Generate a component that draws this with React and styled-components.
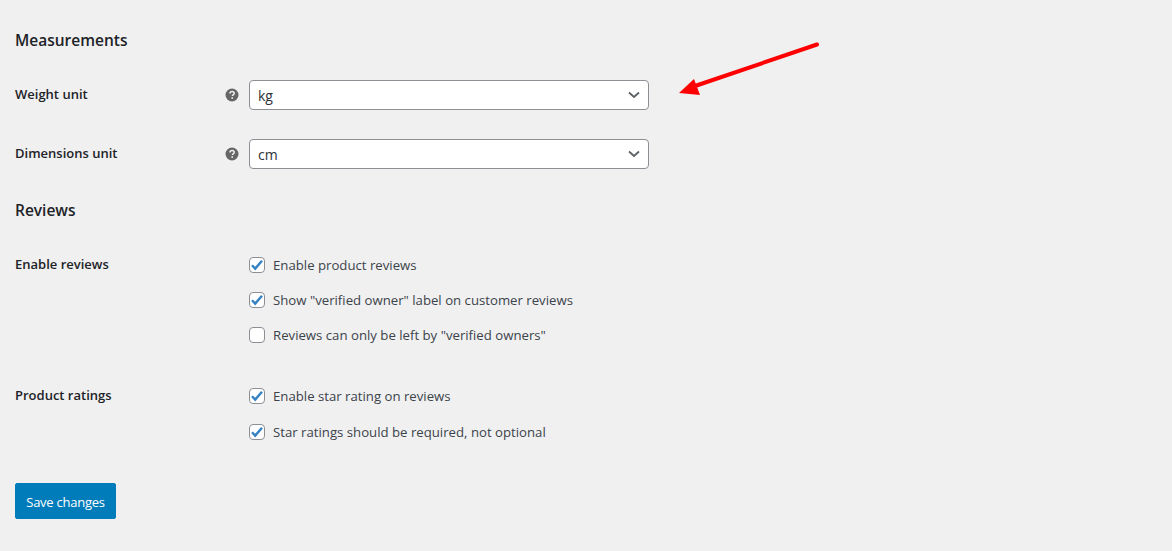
import React from 'react'
import styled, { createGlobalStyle } from 'styled-components'

const GlobalStyle = createGlobalStyle`
  html, body { margin: 0; padding: 0; background: #f0f0f1; }
  body {
    font-family: "Open Sans", "Noto Sans", "Liberation Sans", sans-serif;
    font-size: 13px;
    color: #3c434a;
  }
`

const Page = styled.div`
  position: relative;
  width: 1172px;
  height: 551px;
  box-sizing: border-box;
  padding: 30px 15px 0;
  overflow: hidden;
`

const Heading = styled.h2`
  margin: ${p => p.$top || 0}px 0 0;
  height: 20px;
  font-size: 15.5px;
  line-height: 20px;
  font-weight: 600;
  color: #1d2327;
`

const Row = styled.div`
  display: grid;
  grid-template-columns: 210px 24px 1fr;
  margin-top: ${p => p.$top}px;
`

const Label = styled.div`
  font-size: 13px;
  line-height: 18px;
  font-weight: 600;
  color: #1d2327;
  padding-top: ${p => p.$pad ?? 5}px;
`

const HelpSlot = styled.div`
  display: flex;
  align-items: center;
  height: 30px;
`

const Select = styled.div`
  width: 400px;
  height: 30px;
  box-sizing: border-box;
  border: 1px solid #8c8f94;
  border-radius: 4px;
  background: #fff;
  display: flex;
  align-items: center;
  justify-content: space-between;
  padding: 0 8px;
  font-size: 14px;
  color: #2c3338;
`

const Options = styled.div`
  display: flex;
  flex-direction: column;
  gap: ${p => p.$gap}px;
  grid-column: 3;
`

const Check = styled.label`
  display: flex;
  align-items: center;
  gap: 8px;
  height: 20px;
  font-size: 13.2px;
  color: #3c434a;
`

const Box = styled.span`
  width: 16px;
  height: 16px;
  box-sizing: border-box;
  border: 1px solid #8c8f94;
  border-radius: 4px;
  background: #fff;
  display: flex;
  align-items: center;
  justify-content: center;
`

const SaveButton = styled.button`
  display: block;
  width: 101px;
  height: 36px;
  margin-top: 41px;
  padding: 2px 0 0;
  border: 1px solid #007cba;
  border-radius: 2px;
  background: #007cba;
  color: #fff;
  font-family: inherit;
  font-size: 13px;
  letter-spacing: -0.25px;
`

const Arrow = styled.svg`
  position: absolute;
  left: 670px;
  top: 35px;
`

const HelpIcon = () => (
  <svg width="14" height="14" viewBox="0 0 14 14" aria-hidden="true">
    <circle cx="7" cy="7" r="6.5" fill="#666" />
    <path d="M4.9 5.5C5 4.2 5.9 3.5 7.1 3.5c1.2 0 2.1.7 2.1 1.8 0 .9-.5 1.3-1.1 1.7-.5.3-.7.6-.7 1.1" fill="none" stroke="#f0f0f1" strokeWidth="1.5" />
    <rect x="6.4" y="9.2" width="1.6" height="1.6" fill="#f0f0f1" />
  </svg>
)

const Chevron = () => (
  <svg width="12" height="8" viewBox="0 0 12 8" aria-hidden="true">
    <path d="M1 1.5 6 6l5-4.5" fill="none" stroke="#5c6166" strokeWidth="1.8" />
  </svg>
)

const Tick = () => (
  <svg width="14" height="12" viewBox="0 0 14 12" aria-hidden="true">
    <path d="M2 6.2 5.2 9.6 12 1.8" fill="none" stroke="#3582c4" strokeWidth="2.4" />
  </svg>
)

const CheckRow = ({ checked, children }) => (
  <Check>
    <Box>{checked && <Tick />}</Box>
    {children}
  </Check>
)

const SelectRow = ({ label, value, top }) => (
  <Row $top={top}>
    <Label>{label}</Label>
    <HelpSlot><HelpIcon /></HelpSlot>
    <Select>
      {value}
      <Chevron />
    </Select>
  </Row>
)

export default function App() {
  return (
    <>
      <GlobalStyle />
      <Page>
        <Heading>Measurements</Heading>
        <SelectRow label="Weight unit" value="kg" top={30} />
        <SelectRow label="Dimensions unit" value="cm" top={29} />
        <Heading $top={31}>Reviews</Heading>
        <Row $top={35}>
          <Label $pad={0}>Enable reviews</Label>
          <Options $gap={15}>
            <CheckRow checked>Enable product reviews</CheckRow>
            <CheckRow checked>Show "verified owner" label on customer reviews</CheckRow>
            <CheckRow>Reviews can only be left by "verified owners"</CheckRow>
          </Options>
        </Row>
        <Row $top={41}>
          <Label $pad={0}>Product ratings</Label>
          <Options $gap={16}>
            <CheckRow checked>Enable star rating on reviews</CheckRow>
            <CheckRow checked>Star ratings should be required, not optional</CheckRow>
          </Options>
        </Row>
        <SaveButton>Save changes</SaveButton>
        <Arrow width="160" height="70" viewBox="0 0 160 70" aria-hidden="true">
          <path d="M147 9.5 25 51" fill="none" stroke="#fe0000" strokeWidth="4" strokeLinecap="round" />
          <path d="M9 58 24 44 30 60Z" fill="#fe0000" />
        </Arrow>
      </Page>
    </>
  )
}
